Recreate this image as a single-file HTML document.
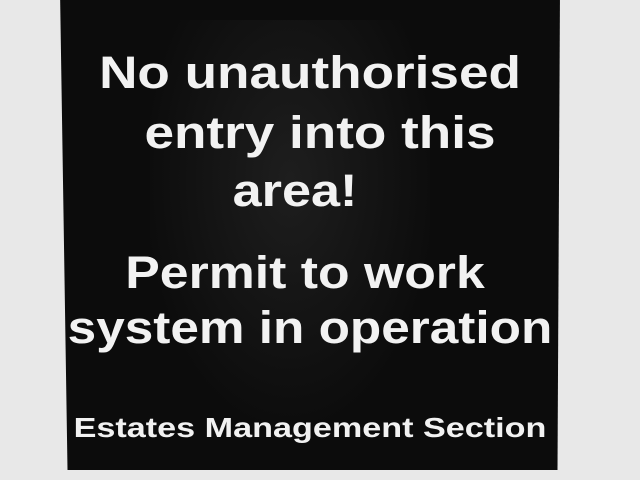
<!DOCTYPE html>
<html><head><style>
html,body{margin:0;padding:0;width:640px;height:480px;overflow:hidden;background:#e8e8e8;}
.sign{position:absolute;left:60px;top:-10px;width:500px;height:480px;background:#0c0c0c;
 clip-path:polygon(0 0,100% 0,99.5% 100%,1.5% 100%);}
.t{position:absolute;left:0;width:640px;text-align:center;color:#f2f2f2;font-family:"Liberation Sans",sans-serif;font-weight:bold;white-space:nowrap;}
.glow{position:absolute;left:150px;top:20px;width:280px;height:400px;background:radial-gradient(ellipse at 50% 40%,#1e1e1e 0%,#121212 50%,rgba(12,12,12,0) 75%);}
</style></head><body>
<div class="sign"></div>
<div class="glow"></div>
<div class="t" style="top:47px;font-size:45px;left:-10px;transform:scaleX(1.18)">No unauthorised</div>
<div class="t" style="top:107px;font-size:45px;left:0px;transform:scaleX(1.18)">entry into this</div>
<div class="t" style="top:165px;font-size:45px;left:-25px;transform:scaleX(1.16)">area!</div>
<div class="t" style="top:247px;font-size:45px;left:-15px;transform:scaleX(1.15)">Permit to work</div>
<div class="t" style="top:302px;font-size:45px;left:-10px;transform:scaleX(1.14)">system in operation</div>
<div class="t" style="top:412px;font-size:28px;left:-10px;transform:scaleX(1.22)">Estates Management Section</div>
</body></html>
